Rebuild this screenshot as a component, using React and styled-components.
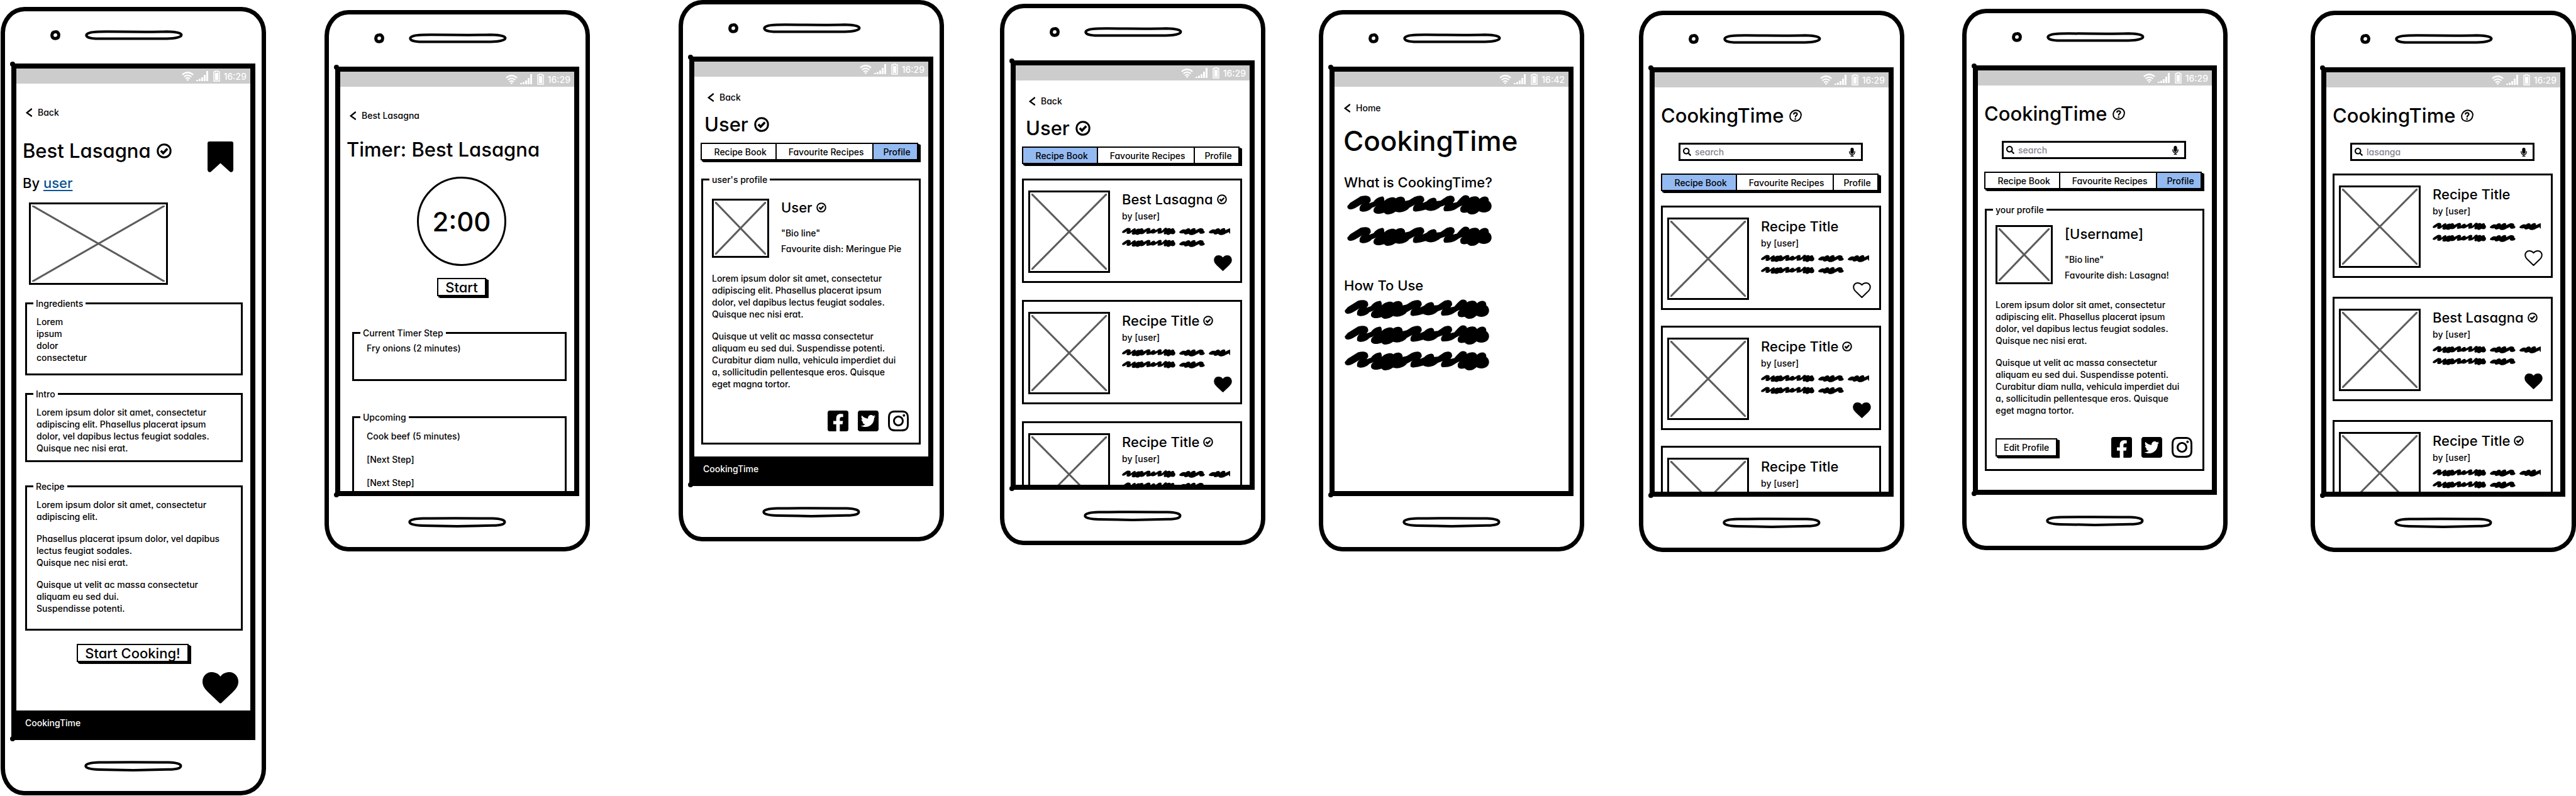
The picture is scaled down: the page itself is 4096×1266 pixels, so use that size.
import React from "react";
import styled, { createGlobalStyle, css } from "styled-components";
import {
  FaFacebookSquare,
  FaTwitterSquare,
  FaInstagram,
  FaSearch,
  FaMicrophone,
} from "react-icons/fa";

const INK = "#000";
const PAPER = "#fff";
const LOREM_A =
  "Lorem ipsum dolor sit amet, consectetur\nadipiscing elit. Phasellus placerat ipsum\ndolor, vel dapibus lectus feugiat sodales.\nQuisque nec nisi erat.";
const LOREM_B =
  "Quisque ut velit ac massa consectetur\naliquam eu sed dui. Suspendisse potenti.\nCurabitur diam nulla, vehicula imperdiet dui\na, sollicitudin pellentesque eros. Quisque\neget magna tortor.";

const Global = createGlobalStyle`
  *, *::before, *::after { box-sizing: border-box; }
  body {
    margin: 0;
    background: ${PAPER};
    color: ${INK};
    font: 500 14px/19px Inter, "DejaVu Sans", sans-serif;
    font-feature-settings: "cv11", "ss03";
  }
  h1, h2, h3, p, ul { margin: 0; padding: 0; font-weight: inherit; font-size: inherit; }
  ul { list-style: none; }
  button, input { font: inherit; font-feature-settings: inherit; color: inherit; margin: 0; }
  svg { display: block; flex: none; }
`;

/* ---------- board and phone ---------- */

const Board = styled.main`
  display: grid;
  grid-template-columns:
    422fr 93fr 422fr 141fr 422fr 89fr 422fr 85fr
    422fr 87fr 422fr 92fr 422fr 132fr 422fr;
  align-items: start;
  padding-left: 1px;
`;

const Phone = styled.section`
  grid-column: ${(p) => p.$slot * 2 - 1};
  margin-top: ${(p) => p.$top}px;
  padding: 0 10px;
  border: 7px solid ${INK};
  border-radius: 38px 39px 40px 37px / 41px 40px 42px 43px;
  background: ${PAPER};
`;

const TopBezel = styled.div`
  display: grid;
  grid-template-columns: 62px 16px 39px 156px;
  align-items: start;
  height: 83px;
  padding-top: 30px;
`;

const Camera = styled.svg`
  grid-column: 2;
`;

const Speaker = styled.svg`
  grid-column: 4;
`;

const BottomBezel = styled.div`
  display: flex;
  justify-content: center;
  height: 81px;
  padding-top: 33px;
`;

const Frame = styled.div`
  position: relative;
  border: 8px solid ${INK};

  &::before,
  &::after {
    content: "";
    position: absolute;
    left: -10px;
    width: 8px;
    height: 8px;
    border-radius: 50%;
    background: ${INK};
  }
  &::before { top: -11px; }
  &::after { bottom: -10px; }
`;

const Screen = styled.div`
  display: flex;
  flex-direction: column;
  overflow: hidden;
  height: ${(p) => (p.$long ? "auto" : "667px")};
`;

const StatusBar = styled.div`
  display: flex;
  flex: none;
  align-items: center;
  justify-content: flex-end;
  height: 24px;
  padding-right: 6px;
  background: #ccc;
  color: ${PAPER};
`;

const StatusIcon = styled.svg`
  margin-right: ${(p) => p.$after}px;
`;

const Body = styled.div`
  display: flex;
  flex-direction: column;
  flex: none;
  padding: ${(p) => p.$top}px 12px 0 10px;
`;

const Footer = styled.footer`
  flex: none;
  margin-top: ${(p) => (p.$gap ? `${p.$gap}px` : "auto")};
  padding: 10px 14px;
  background: ${INK};
  color: ${PAPER};
`;

const outline = { fill: "none", stroke: INK, strokeLinejoin: "round" };

function PhoneView({ slot, top, long, time = "16:29", label, children }) {
  return (
    <Phone $slot={slot} $top={top} aria-label={label}>
      <TopBezel>
        <Camera width="16" height="16" viewBox="0 0 16 16" aria-hidden="true">
          <path d="M8 2.6C11.8 2.2 13.6 5 13.4 8.2C13.2 11.6 11 13.4 7.6 13.3C4.4 13.2 2.4 11 2.6 7.8C2.8 4.6 5 2.8 8 2.6Z" {...outline} strokeWidth="5" />
        </Camera>
        <Speaker width="156" height="16" viewBox="0 0 156 16" aria-hidden="true">
          <path d="M22 2.4C60 2 95 3.4 130 2.2C145 2.4 153.500 4.500 153.500 7.500C153.500 11 143 13.400 130 13.400L22 13.600C8 13.600 2.300 11 2.300 8C2.300 5 8 2.800 22 2.400Z" {...outline} strokeWidth="4" />
        </Speaker>
      </TopBezel>
      <Frame>
        <Screen $long={long}>
          <StatusBar>
            <StatusIcon $after={4} width="19" height="15" viewBox="0 0 19 15" aria-hidden="true">
              <g fill="none" stroke="#fff" strokeWidth="2.200">
                <path d="M.8 5Q9.500-2.500 18.200 5" />
                <path d="M3.600 8.200Q9.500 3 15.400 8.200" />
                <path d="M6.200 11.200Q9.500 8.200 12.800 11.200" />
              </g>
              <path d="M7.400 12.800Q9.500 11 11.600 12.800L9.500 15Z" fill="#fff" />
            </StatusIcon>
            <StatusIcon $after={8} width="19" height="16" viewBox="0 0 19 16" fill="#fff" aria-hidden="true">
              <path d="M0 14h3v2H0zM4 12.500h3V16H4zM8 10h3v6H8zM12 6h3v10h-3zM16 0h3v16h-3z" />
            </StatusIcon>
            <StatusIcon $after={6} width="11" height="18" viewBox="0 0 11 18" aria-hidden="true">
              <path d="M1 2.200H3.500V1H7.500V2.200H10V17H1Z" fill="none" stroke="#fff" strokeWidth="1.400" />
              <path d="M2.800 4H8.200V15.200H2.800Z" fill="#fff" />
            </StatusIcon>
            {time}
          </StatusBar>
          {children}
        </Screen>
      </Frame>
      <BottomBezel>
        <svg width="156" height="17" viewBox="0 0 156 17" aria-hidden="true">
          <path d="M24 2.600C60 2 100 2.200 134 2.600C147 3 153.500 5 153.500 8.200C153.500 12 146 13.800 134 13.800L78 14.900L24 13.900C9 13.600 2.300 11.500 2.300 8.300C2.300 5 9 2.900 24 2.600Z" {...outline} strokeWidth="4" />
        </svg>
      </BottomBezel>
    </Phone>
  );
}

/* ---------- text and small parts ---------- */

const BackLink = styled.a`
  display: flex;
  align-items: center;
  gap: 9px;
  padding-left: ${(p) => p.$inset}px;
  color: inherit;
  text-decoration: none;
`;

function Back({ inset = 5, children }) {
  return (
    <BackLink href="#back" $inset={inset}>
      <svg width="10" height="14" viewBox="0 0 10 14" aria-hidden="true">
        <path d="M9 1.500L1.800 7.400L9 12.500" fill="none" stroke={INK} strokeWidth="2.400" strokeLinecap="round" />
      </svg>
      {children}
    </BackLink>
  );
}

const TitleRow = styled.div`
  display: flex;
  align-items: center;
  gap: 9px;
  margin-top: ${(p) => p.$mt ?? 0}px;
  padding-left: ${(p) => p.$inset ?? 0}px;
`;

const Title = styled.h1`
  font-size: 31px;
  line-height: 40px;
  white-space: nowrap;
`;

const BigTitle = styled.h1`
  margin-top: 17px;
  padding-left: 4px;
  font-size: 44px;
  line-height: 52px;
`;

const subtitle = css`
  font-size: 22px;
  line-height: 28px;
`;

const Subtitle = styled.h2`
  ${subtitle}
  margin-top: ${(p) => p.$mt ?? 0}px;
  padding-left: ${(p) => p.$inset ?? 0}px;
  white-space: nowrap;
`;

const Text = styled.p`
  white-space: pre;
`;

const UserLink = styled.a`
  color: #0b5394;
  text-decoration-thickness: 2px;
  text-underline-offset: 3px;
`;

function Check({ size }) {
  return (
    <svg width={size} height={size} viewBox="0 0 24 24" role="img" aria-label="verified">
      <path d="M12 1.800C18 1.800 22.300 6.400 22.200 12.200C22.100 18 17.800 22.300 12 22.300C6 22.300 1.700 18 1.800 12C1.900 6.200 6.200 1.800 12 1.800Z" fill="none" stroke={INK} strokeWidth="3" />
      <path d="M6.800 11.800L10.500 15.600L17.200 8.600" fill="none" stroke={INK} strokeWidth="3.600" />
    </svg>
  );
}

function HelpIcon() {
  return (
    <svg width="20" height="20" viewBox="0 0 20 20" role="img" aria-label="help">
      <path d="M11 1.200C16 1.500 19.200 4.800 18.900 9.400C18.400 15 14.200 18.800 9.200 18.700C4.200 18.500 1.100 15.500 1.200 11C1.400 5.300 5.800 1.300 11 1.200Z" fill="none" stroke={INK} strokeWidth="2" />
      <path d="M7.200 7.300C7.400 4.900 12.600 4.600 12.600 7.400C12.600 9.400 10 9.600 9.900 12" fill="none" stroke={INK} strokeWidth="2.200" strokeLinecap="round" />
      <circle cx="9.700" cy="15.200" r="1.300" />
    </svg>
  );
}

function Heart({ width, height, open }) {
  return (
    <svg width={width} height={height} viewBox="0 0 57 50" role="img" aria-label={open ? "not liked" : "liked"}>
      <path
        d={
          open
            ? "M28.500 8.500C32 4 37 2 42 2C50 2 55 8 55 15C55 22 51 27 46 31L28.500 48L11 31C6 27 2 22 2 15C2 8 7 2 15 2C20 2 25 4 28.500 8.500Z"
            : "M28.500 7C32 2 37 0 43 0C51 0 57 7 57 15C57 22 53 27 48 32L30 49Q28.500 50.500 27 49L9 32C4 27 0 22 0 15C0 7 6 0 14 0C20 0 25 2 28.500 7Z"
        }
        fill={open ? "none" : INK}
        stroke={open ? INK : "none"}
        strokeWidth="4"
        strokeLinejoin="round"
      />
    </svg>
  );
}

const Bookmark = styled.svg`
  margin: 5px 15px 0 auto;
`;

/* ---------- image placeholder ---------- */

const Placeholder = styled.div`
  flex: none;
  display: flex;
  width: ${(p) => p.$w}px;
  height: ${(p) => p.$h}px;
  margin-top: ${(p) => p.$mt ?? 0}px;
  margin-left: ${(p) => p.$inset ?? 0}px;
  padding: 2px;
  border: 3px solid ${INK};
`;

function Picture({ w, h, mt, inset }) {
  return (
    <Placeholder $w={w} $h={h} $mt={mt} $inset={inset}>
      <svg width="100%" height="100%" aria-hidden="true">
        <g stroke="#5c5c5c" strokeWidth="3">
          <line x1="0" y1="0" x2="100%" y2="100%" />
          <line x1="0" y1="100%" x2="100%" y2="0" />
        </g>
      </svg>
    </Placeholder>
  );
}

/* ---------- scribbled text ---------- */

const LONG_SCRIBBLE =
  "M183 585L200 575L260 556C300 552 320 556 318 570L308 577L335 572C345 562 380 555 390 557Q398 560 396 570C410 561 450 555 462 562C480 555 515 553 517 570L540 567L570 558C600 552 627 552 627 568L617 576L640 571C665 558 698 556 698 570L720 569L755 557C780 552 803 553 802 568L792 576L815 573C830 565 845 555 860 553C875 552 887 555 887 561C905 554 940 554 945 564C965 554 1000 553 999 570C1018 576 1020 590 1005 597C990 604 965 606 942 600C925 610 890 613 875 603C845 607 830 603 835 590L845 583L825 588C800 598 780 600 745 600C735 598 735 588 748 582L720 587C690 600 660 602 635 595C600 600 570 604 562 597C560 590 565 583 575 580L540 590C525 602 480 606 462 601C440 609 410 613 395 604C365 610 335 608 334 598C335 590 345 586 355 584L325 590C305 602 270 604 255 598C250 590 258 582 270 578L240 587C205 599 183 595 183 585Z";
const SHORT_SCRIBBLE =
  "M1045 659C1055 652 1070 649 1083 652C1095 646 1110 647 1110 653C1125 646 1143 645 1140 654L1155 650C1168 646 1190 647 1187 655C1196 657 1197 661 1185 663C1172 665 1160 664 1162 659L1140 664C1125 669 1105 669 1100 664C1085 667 1075 667 1072 662C1060 664 1045 663 1045 659Z";

const ScribbleStack = styled.div`
  display: flex;
  flex-direction: column;
  gap: ${(p) => p.$gap}px;
  margin-top: ${(p) => p.$mt}px;
  padding-left: ${(p) => p.$inset ?? 0}px;
`;

const ScribbleRow = styled.div`
  display: flex;
  gap: 6px;
`;

function LongScribble({ width, height }) {
  return (
    <svg width={width} height={height} viewBox="182 552 834 59" preserveAspectRatio="none" aria-hidden="true">
      <path d={LONG_SCRIBBLE} />
    </svg>
  );
}

function ShortScribble({ width, cut = 150 }) {
  return (
    <svg width={width} height="12" viewBox={`1045 646 ${cut} 22`} preserveAspectRatio="none" aria-hidden="true">
      <path d={SHORT_SCRIBBLE} />
    </svg>
  );
}

/* ---------- controls ---------- */

const Button = styled.button`
  align-self: ${(p) => p.$align ?? "center"};
  display: flex;
  align-items: center;
  justify-content: center;
  height: 29px;
  margin-top: ${(p) => p.$mt ?? 0}px;
  margin-left: ${(p) => p.$inset ?? 0}px;
  padding: 0 11px;
  border: 2px solid ${INK};
  background: ${PAPER};
  box-shadow: 2px 2px 0 ${INK}, 4px 3px 0 ${INK};
  ${(p) => p.$large && subtitle}
`;

const TabBar = styled.nav`
  display: grid;
  grid-template-columns: 119fr 156fr 72fr;
  height: 28px;
  margin-top: ${(p) => p.$mt}px;
  margin-right: 4px;
  border: 2px solid ${INK};
  box-shadow: 2px 2px 0 ${INK}, 4px 3px 0 ${INK};
`;

const Tab = styled.button`
  padding: 0 0 0 5px;
  border: 0;
  border-left: ${(p) => (p.$first ? 0 : 2)}px solid ${INK};
  background: ${(p) => (p.$active ? "#94baf2" : PAPER)};
`;

function Tabs({ active, mt }) {
  return (
    <TabBar $mt={mt}>
      {["Recipe Book", "Favourite Recipes", "Profile"].map((name, i) => (
        <Tab key={name} type="button" $first={i === 0} $active={name === active}>
          {name}
        </Tab>
      ))}
    </TabBar>
  );
}

const SearchBox = styled.label`
  display: flex;
  align-items: center;
  gap: 6px;
  height: 29px;
  margin: 23px 29px 0 28px;
  padding: 0 7px 0 4px;
  border: 3px solid ${INK};
`;

const SearchInput = styled.input`
  flex: 1;
  min-width: 0;
  padding: 0;
  border: 0;
  outline: 0;
  background: none;
  color: #86838f;
  &::placeholder { color: #86838f; opacity: 1; }
`;

function AppHeader({ value }) {
  return (
    <>
      <TitleRow>
        <Title>CookingTime</Title>
        <HelpIcon />
      </TitleRow>
      <SearchBox>
        <FaSearch size={13} />
        <SearchInput type="text" aria-label="Search recipes" placeholder="search" defaultValue={value} />
        <FaMicrophone size={14} />
      </SearchBox>
    </>
  );
}

/* ---------- titled groups ---------- */

const Fieldset = styled.fieldset`
  min-width: 0;
  margin: ${(p) => p.$mt}px 0 0 ${(p) => p.$inset ?? 0}px;
  padding: 0 10px;
  border: 3px solid ${INK};
`;

const Legend = styled.legend`
  padding: 0 4px;
`;

const GroupBody = styled.div`
  display: flex;
  flex-direction: column;
  gap: ${(p) => p.$gap ?? 16}px;
  padding: ${(p) => p.$top}px 0 ${(p) => p.$bottom}px ${(p) => p.$left}px;
`;

function Group({ title, mt, inset, top = 10, bottom = 16, left = 5, gap, children }) {
  return (
    <Fieldset $mt={mt} $inset={inset}>
      <Legend>{title}</Legend>
      <GroupBody $top={top} $bottom={bottom} $left={left} $gap={gap}>
        {children}
      </GroupBody>
    </Fieldset>
  );
}

/* ---------- recipe cards ---------- */

const CardList = styled.div`
  display: flex;
  flex-direction: column;
  gap: ${(p) => p.$gap}px;
  margin-top: ${(p) => p.$mt}px;
`;

const CardBox = styled.article`
  display: flex;
  gap: 19px;
  padding: 16px 13px 13px 7px;
  border: 3px solid ${INK};
`;

const CardInfo = styled.div`
  display: flex;
  flex: 1;
  flex-direction: column;
  min-width: 0;
`;

const CardTitleRow = styled.div`
  display: flex;
  align-items: center;
  gap: 6px;
  margin-bottom: 3px;
`;

const CardHeart = styled.div`
  display: flex;
  justify-content: flex-end;
  margin-top: 13px;
`;

function Card({ title = "Recipe Title", verified, liked }) {
  return (
    <CardBox>
      <Picture w={130} h={131} />
      <CardInfo>
        <CardTitleRow>
          <Subtitle>{title}</Subtitle>
          {verified && <Check size={16} />}
        </CardTitleRow>
        <Text>by [user]</Text>
        <ScribbleStack $gap={7} $mt={9}>
          <ScribbleRow>
            <LongScribble width={85} height={12} />
            <ShortScribble width={41} />
            <ShortScribble width={34} cut={123} />
          </ScribbleRow>
          <ScribbleRow>
            <LongScribble width={85} height={12} />
            <ShortScribble width={41} />
          </ScribbleRow>
        </ScribbleStack>
        <CardHeart>
          <Heart width={29} height={25} open={!liked} />
        </CardHeart>
      </CardInfo>
    </CardBox>
  );
}

/* ---------- profile ---------- */

const ProfileTop = styled.div`
  display: flex;
  gap: 19px;
  margin-bottom: 7px;
`;

const ProfileInfo = styled.div`
  display: flex;
  flex-direction: column;
  gap: 6px;
`;

const ProfileName = styled.div`
  display: flex;
  align-items: center;
  gap: 6px;
  margin-bottom: 11px;
`;

const ProfileActions = styled.div`
  display: flex;
  align-items: center;
  margin: 17px 6px 0 0;
`;

const Socials = styled.div`
  display: flex;
  gap: 15px;
  margin-left: auto;
`;

const SocialLink = styled.a`
  color: inherit;
`;

const SOCIALS = [
  ["Facebook", FaFacebookSquare],
  ["Twitter", FaTwitterSquare],
  ["Instagram", FaInstagram],
];

function Profile({ title, name, verified, dish, mt, top, editable }) {
  return (
    <Group title={title} mt={mt} inset={1} top={top} bottom={18} left={4}>
      <ProfileTop>
        <Picture w={91} h={94} />
        <ProfileInfo>
          <ProfileName>
            <Subtitle>{name}</Subtitle>
            {verified && <Check size={16} />}
          </ProfileName>
          <Text>"Bio line"</Text>
          <Text>Favourite dish: {dish}</Text>
        </ProfileInfo>
      </ProfileTop>
      <Text>{LOREM_A}</Text>
      <Text>{LOREM_B}</Text>
      <ProfileActions>
        {editable && <Button type="button">Edit Profile</Button>}
        <Socials>
          {SOCIALS.map(([label, Icon]) => (
            <SocialLink key={label} href={`#${label.toLowerCase()}`} aria-label={label}>
              <Icon size={33} viewBox="0 32 448 448" />
            </SocialLink>
          ))}
        </Socials>
      </ProfileActions>
    </Group>
  );
}

/* ---------- recipe and timer pages ---------- */

const RecipeHeader = styled.header`
  display: flex;
  align-items: flex-start;
  margin-top: 32px;
`;

const BigHeart = styled.div`
  display: flex;
  justify-content: flex-end;
  margin: 16px 7px 0 0;
`;

const Dial = styled.div`
  display: flex;
  align-items: center;
  justify-content: center;
  align-self: center;
  width: 142px;
  height: 142px;
  margin-top: 23px;
  margin-left: 16px;
  border: 3px solid ${INK};
  border-radius: 50%;
  font-size: 42px;
`;

export default function App() {
  return (
    <>
      <Global />
      <Board>
        <PhoneView slot={1} top={11} long label="Recipe">
          <Body $top={36}>
            <Back>Back</Back>
            <RecipeHeader>
              <div>
                <TitleRow>
                  <Title>Best Lasagna</Title>
                  <Check size={24} />
                </TitleRow>
                <Subtitle $mt={17}>
                  By <UserLink href="#user">user</UserLink>
                </Subtitle>
              </div>
              <Bookmark width="41" height="49" viewBox="0 0 41 49" role="img" aria-label="bookmarked">
                <path d="M3 0H38Q41 0 41 3V45Q40 50 36 48.500L20.500 34.500L5 48.500Q1 50 0 45V3Q0 0 3 0Z" />
              </Bookmark>
            </RecipeHeader>
            <Picture w={221} h={131} mt={17} inset={10} />
            <Group title="Ingredients" mt={20} inset={4}>
              <Text>{"Lorem\nipsum\ndolor\nconsectetur"}</Text>
            </Group>
            <Group title="Intro" mt={20} inset={4} bottom={10}>
              <Text>{LOREM_A}</Text>
            </Group>
            <Group title="Recipe" mt={29} inset={4} bottom={23}>
              <Text>{"Lorem ipsum dolor sit amet, consectetur\nadipiscing elit."}</Text>
              <Text>{"Phasellus placerat ipsum dolor, vel dapibus\nlectus feugiat sodales.\nQuisque nec nisi erat."}</Text>
              <Text>{"Quisque ut velit ac massa consectetur\naliquam eu sed dui.\nSuspendisse potenti."}</Text>
            </Group>
            <Button type="button" $large $mt={21}>Start Cooking!</Button>
            <BigHeart>
              <Heart width={57} height={50} />
            </BigHeart>
          </Body>
          <Footer $gap={11}>CookingTime</Footer>
        </PhoneView>

        <PhoneView slot={2} top={16} label="Timer">
          <Body $top={36}>
            <Back>Best Lasagna</Back>
            <TitleRow $mt={25}>
              <Title>Timer: Best Lasagna</Title>
            </TitleRow>
            <Dial role="timer">2:00</Dial>
            <Button type="button" $large $mt={19} $inset={16}>Start</Button>
            <Group title="Current Timer Step" mt={49} inset={9} top={5} bottom={40} left={10}>
              <Text>Fry onions (2 minutes)</Text>
            </Group>
            <Group title="Upcoming" mt={48} inset={9} top={11} left={10} gap={18}>
              <Text>Cook beef (5 minutes)</Text>
              <Text>[Next Step]</Text>
              <Text>[Next Step]</Text>
            </Group>
          </Body>
        </PhoneView>

        <PhoneView slot={3} top={0} label="User profile">
          <Body $top={23}>
            <Back inset={11}>Back</Back>
            <TitleRow $mt={14} $inset={6}>
              <Title>User</Title>
              <Check size={24} />
            </TitleRow>
            <Tabs active="Profile" mt={9} />
            <Profile title="user's profile" name="User" verified dish="Meringue Pie" mt={21} top={21} />
          </Body>
          <Footer>CookingTime</Footer>
        </PhoneView>

        <PhoneView slot={4} top={6} label="User recipe book">
          <Body $top={23}>
            <Back inset={11}>Back</Back>
            <TitleRow $mt={14} $inset={6}>
              <Title>User</Title>
              <Check size={24} />
            </TitleRow>
            <Tabs active="Recipe Book" mt={9} />
            <CardList $mt={23} $gap={27}>
              <Card title="Best Lasagna" verified liked />
              <Card verified liked />
              <Card verified liked />
            </CardList>
          </Body>
        </PhoneView>

        <PhoneView slot={5} top={16} time="16:42" label="About">
          <Body $top={24}>
            <Back>Home</Back>
            <BigTitle>CookingTime</BigTitle>
            <Subtitle $mt={26} $inset={5}>What is CookingTime?</Subtitle>
            <ScribbleStack $mt={6} $gap={18} $inset={10}>
              <LongScribble width={230} height={32} />
              <LongScribble width={230} height={32} />
            </ScribbleStack>
            <Subtitle $mt={48} $inset={5}>How To Use</Subtitle>
            <ScribbleStack $mt={8} $gap={9} $inset={6}>
              <LongScribble width={230} height={32} />
              <LongScribble width={230} height={32} />
              <LongScribble width={230} height={32} />
            </ScribbleStack>
          </Body>
        </PhoneView>

        <PhoneView slot={6} top={17} label="Recipe book">
          <Body $top={25}>
            <AppHeader />
            <Tabs active="Recipe Book" mt={20} />
            <CardList $mt={23} $gap={25}>
              <Card />
              <Card verified liked />
              <Card />
            </CardList>
          </Body>
        </PhoneView>

        <PhoneView slot={7} top={14} label="Your profile">
          <Body $top={25}>
            <AppHeader />
            <Tabs active="Profile" mt={20} />
            <Profile title="your profile" name="[Username]" dish="Lasagna!" mt={23} top={15} editable />
          </Body>
        </PhoneView>

        <PhoneView slot={8} top={17} label="Search results">
          <Body $top={25}>
            <AppHeader value="lasanga" />
            <CardList $mt={20} $gap={30}>
              <Card />
              <Card title="Best Lasagna" verified liked />
              <Card verified liked />
            </CardList>
          </Body>
        </PhoneView>
      </Board>
    </>
  );
}
